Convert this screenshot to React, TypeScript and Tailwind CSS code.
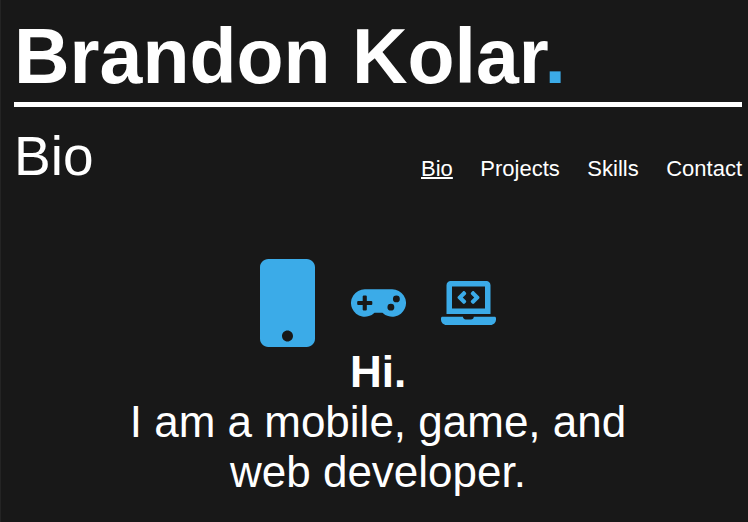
import { FaGamepad, FaLaptopCode } from "react-icons/fa";

const links = ["Bio", "Projects", "Skills", "Contact"];

export default function App() {
  return (
    <div className="flex h-[522px] w-[748px] flex-col overflow-hidden border-l border-[#242424] bg-[#181818] pl-[13px] pr-[6px] font-['Liberation_Sans',Arial,sans-serif] text-white">
      <h1 className="mt-[11px] h-[91px] whitespace-nowrap text-[77px] leading-[90px] font-bold">
        Brandon Kolar<span className="text-[#3babe8]">.</span>
      </h1>
      <div className="h-[5px] bg-white" />
      <header className="mt-[18px] flex h-[64px] items-start justify-between">
        <h2 className="text-[55px] leading-[62px]">Bio</h2>
        <nav className="mt-[31px] flex gap-[27.5px] text-[22px] leading-[26px]">
          {links.map((l, i) => (
            <a key={l} className={i === 0 ? "underline decoration-2" : ""}>{l}</a>
          ))}
        </nav>
      </header>
      <main className="mt-[70px] flex flex-col items-center">
        <div className="flex h-[88px] items-center gap-[35.5px] text-[#3babe8]">
          <svg viewBox="0 0 320 512" className="h-[88px] w-[55px]" fill="currentColor">
            <path d="M272 0H48C21.500 0 0 21.500 0 48v416c0 26.500 21.500 48 48 48h224c26.500 0 48-21.500 48-48V48c0-26.500-21.500-48-48-48zM160 480c-17.700 0-32-14.300-32-32s14.300-32 32-32 32 14.300 32 32-14.300 32-32 32z" />
          </svg>
          <FaGamepad className="h-[44px] w-[55px]" />
          <FaLaptopCode className="h-[44px] w-[55px]" />
        </div>
        <p className="text-center text-[44px] leading-[50px]">
          <b>Hi.</b><br />I am a mobile, game, and<br />web developer.
        </p>
      </main>
    </div>
  );
}
